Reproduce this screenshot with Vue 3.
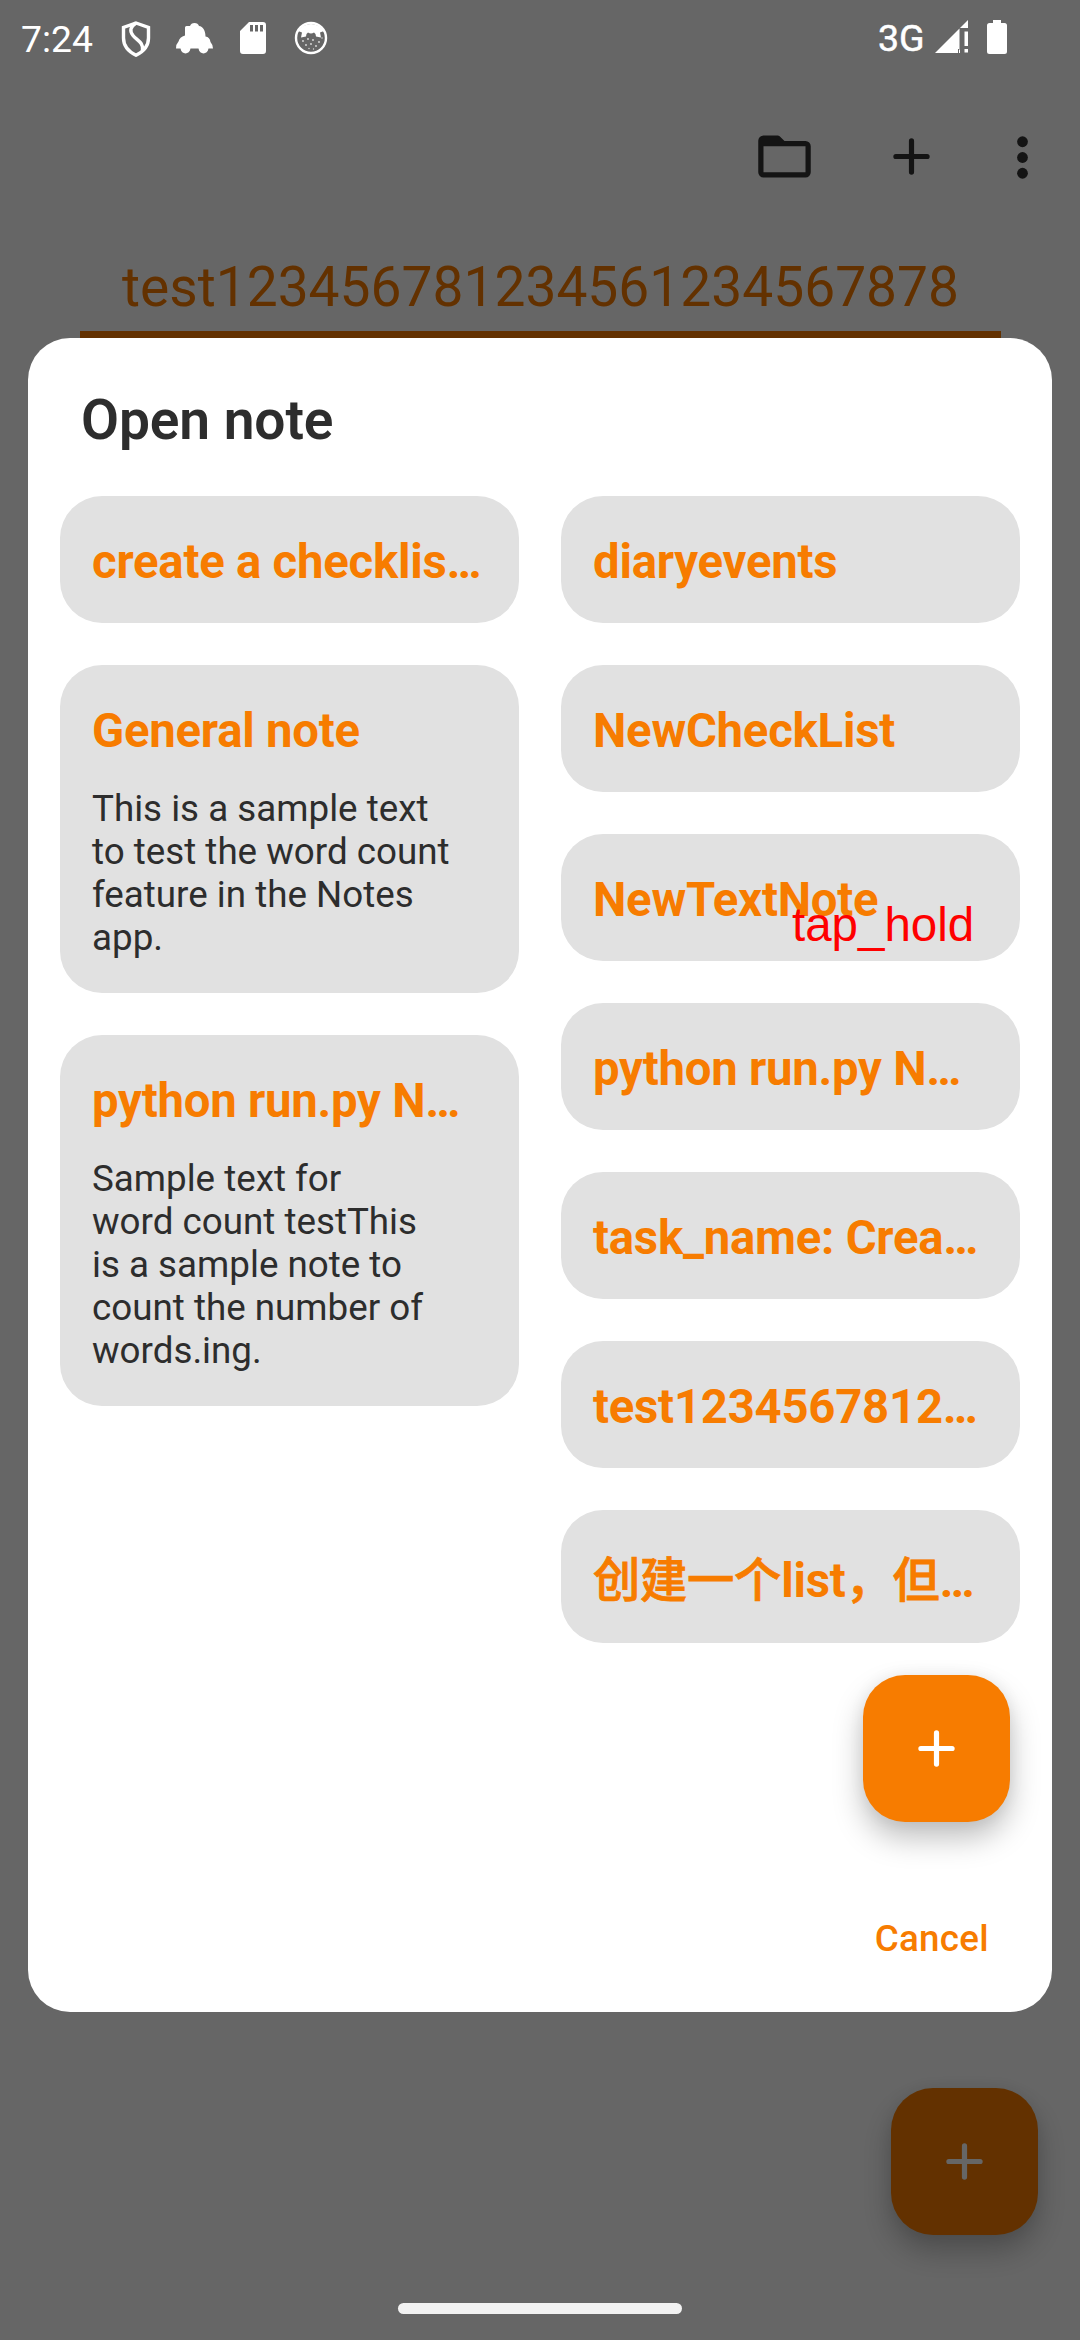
<script setup>
const leftNotes = [
  { title: 'create a checklis…' },
  {
    title: 'General note',
    body: 'This is a sample text\nto test the word count\nfeature in the Notes\napp.',
  },
  {
    title: 'python run.py N…',
    body: 'Sample text for\nword count testThis\nis a sample note to\ncount the number of\nwords.ing.',
  },
]
const rightNotes = [
  { title: 'diaryevents' },
  { title: 'NewCheckList' },
  { title: 'NewTextNote' },
  { title: 'python run.py N…' },
  { title: 'task_name: Crea…' },
  { title: 'test1234567812…' },
  { title: '创建一个list，但…', tall: true },
]
const columns = [leftNotes, rightNotes]

// Split a title into runs so Han text can carry its own weight.
const hanRun = /([\u3000-\u9fff\uff00-\uffef]+)/
const runs = (text) =>
  text
    .split(hanRun)
    .filter(Boolean)
    .map((part) => ({ part, han: hanRun.test(part) }))
</script>

<template>
  <div class="screen">
    <div class="app">
      <header class="toolbar">
        <svg class="icon" viewBox="0 0 24 24">
          <path fill-rule="evenodd" d="M4 4h5.4q.45 0 .75.3L12 6.1h8a2 2 0 0 1 2 2V18a2 2 0 0 1-2 2H4a2 2 0 0 1-2-2V6a2 2 0 0 1 2-2zM4 8.1V18h16V8.1z" />
        </svg>
        <svg class="icon add" viewBox="0 0 24 24">
          <path d="M12 6v12M6 12h12" />
        </svg>
        <svg class="icon more" viewBox="0 0 24 24">
          <circle cx="12" cy="6" r="2.05" />
          <circle cx="12" cy="12" r="2.05" />
          <circle cx="12" cy="18" r="2.05" />
        </svg>
      </header>
      <div class="tab">test123456781234561234567878</div>
      <button class="fab app-fab">
        <svg class="icon add" viewBox="0 0 24 24"><path d="M12 6v12M6 12h12" /></svg>
      </button>
    </div>

    <div class="scrim"></div>

    <div class="overlay">
      <div class="statusbar">
        <span class="clock">7:24</span>
        <svg class="s-shield" viewBox="0 0 30 36" width="30" height="36">
          <path d="M15 2 27.5 6.4V17c0 8-5 13.600-12.500 17.200C7.500 30.600 2.500 25 2.500 17V6.400z" />
          <path d="M15 2C9 6 8.500 10 12 14.500s11 7 9.500 15" />
        </svg>
        <svg class="s-car" viewBox="0 0 37 31" width="37" height="31">
          <path d="M9 4.500q0-1.500 1.500-1.500H14q1-3 4.500-3T23 3c4 .5 6.500 4.500 6.500 10.500 3 .5 4.500 2 5 5.500q2 2 2.500 6.500h-4.500c-1 6.500-9 6.500-10 0h-8c-1 6.500-9 6.500-10 0H0Q0 21 2.500 18.500 3.500 14 9 12.500z" />
        </svg>
        <svg class="s-sd" viewBox="0 0 26 32" width="26" height="32">
          <path fill-rule="evenodd" d="M9 0h14a3 3 0 0 1 3 3v26a3 3 0 0 1-3 3H3a3 3 0 0 1-3-3V9zM10 3v6.500h3V3zM15 3v6.500h3V3zM20 3v6.500h3V3z" />
        </svg>
        <svg class="s-cat" viewBox="0 0 34 34" width="34" height="34">
          <circle class="ring" cx="17" cy="17" r="15" />
          <path d="M4 10Q9 3 17 3t13 7l-4 1.500 1 5-5-1q0-3-2-4-3 2-6 0-2 1-2 4l-5 1 1-5z" />
          <g class="dots">
            <circle cx="9" cy="20" r=".9" /><circle cx="14" cy="18" r=".9" /><circle cx="19" cy="19" r=".9" />
            <circle cx="25" cy="21" r=".9" /><circle cx="12" cy="24" r=".9" /><circle cx="17" cy="23" r=".9" />
            <circle cx="22" cy="25" r=".9" /><circle cx="15" cy="27.500" r=".7" /><circle cx="19.500" cy="28" r=".7" />
            <circle cx="28" cy="17" r=".7" />
          </g>
        </svg>
        <span class="network">3G</span>
        <svg class="s-signal" viewBox="0 0 33 33" width="33" height="33">
          <path d="M33 0v8h-8zM24.500 8.500V29h-1.500v4H0zM29.500 11.500h3.500V26h-3.500zM29.500 29h3.500v3.500h-3.500zM24 29.500h1V33h-1z" />
        </svg>
        <svg class="s-battery" viewBox="0 0 20 34" width="20" height="34">
          <path d="M6 0h8v3h3.500A2.500 2.500 0 0 1 20 5.500v26a2.500 2.500 0 0 1-2.500 2.500h-15A2.500 2.500 0 0 1 0 31.500v-26A2.500 2.500 0 0 1 2.500 3H6z" />
        </svg>
      </div>

      <section class="dialog">
        <h1 class="heading">Open note</h1>
        <div class="notes">
          <div v-for="(col, i) in columns" :key="i" class="column">
            <article v-for="note in col" :key="note.title" class="card" :class="{ tall: note.tall }">
              <h2 class="title"><span v-for="(run, r) in runs(note.title)" :key="r" :class="{ han: run.han }">{{ run.part }}</span></h2>
              <p v-if="note.body" class="body">{{ note.body }}</p>
            </article>
          </div>
        </div>
        <button class="fab">
          <svg class="icon add" viewBox="0 0 24 24"><path d="M12 6v12M6 12h12" /></svg>
        </button>
        <button class="cancel">Cancel</button>
        <span class="gesture">tap_hold</span>
      </section>

      <div class="nav-handle"></div>
    </div>
  </div>
</template>

<style>
body {
  margin: 0;
}
</style>

<style scoped>
.screen {
  display: grid;
  width: 1080px;
  height: 2340px;
  overflow: hidden;
  font-family: Roboto, "Noto Sans CJK SC", sans-serif;
}
.app,
.scrim,
.overlay {
  grid-area: 1 / 1;
  box-sizing: border-box;
  width: 1080px;
  height: 2340px;
  display: flex;
  flex-direction: column;
}
.app {
  background: #fff;
}
.scrim {
  background: rgba(0, 0, 0, 0.6);
  z-index: 1;
}
.overlay {
  z-index: 2;
}
.icon {
  display: block;
  width: 63px;
  height: 63px;
  fill: #333;
}
.add {
  fill: none;
  stroke: #333;
  stroke-width: 2;
  stroke-linecap: round;
}
.add path {
  transform: scale(0.99);
  transform-origin: 12px 12px;
}
.toolbar {
  display: flex;
  justify-content: flex-end;
  align-items: center;
  height: 63px;
  margin-top: 125px;
  padding-right: 26px;
}
.toolbar .add {
  margin-left: 64px;
}
.toolbar .more {
  margin-left: 48px;
  position: relative;
  top: 1px;
}
.tab {
  height: 80px;
  margin: 63px 79px 0 80px;
  border-bottom: 12px solid #f77c00;
  color: #f77c00;
  font-size: 55.125px;
  line-height: 72px;
  text-align: center;
}
.fab {
  display: flex;
  align-items: center;
  justify-content: center;
  align-self: flex-end;
  flex: none;
  width: 147px;
  height: 147px;
  padding: 0;
  border: 0;
  border-radius: 42px;
  background: #f77c00;
  box-shadow: 0 16px 30px rgba(0, 0, 0, 0.25), 0 0 16px rgba(0, 0, 0, 0.06);
}
.fab .add {
  stroke: #fff;
}
.app-fab {
  margin: auto 42px 105px 0;
}
.statusbar {
  display: flex;
  align-items: flex-start;
  height: 76px;
  margin-bottom: 262px;
  flex: none;
  color: #fff;
}
.statusbar svg {
  flex: none;
  fill: #fff;
}
.clock {
  width: 99px;
  padding-left: 21px;
  margin-top: 17px;
  font-size: 37.3px;
  line-height: 44px;
}
.statusbar .s-shield {
  margin: 21px 0 0 1px;
  fill: none;
  stroke: #fff;
  stroke-width: 3.4;
}
.s-car {
  margin: 23px 0 0 25px;
}
.s-sd {
  margin: 22px 0 0 27px;
}
.s-cat {
  margin: 21px 0 0 28px;
}
.statusbar .ring {
  fill: none;
  stroke: #fff;
  stroke-width: 2.4;
}
.dots {
  opacity: 0.8;
}
.network {
  width: 57px;
  margin: 17px 0 0 550px;
  font-size: 37.5px;
  line-height: 42px;
  -webkit-text-stroke: 0.5px #fff;
}
.s-signal {
  margin: 20px 0 0 0;
}
.s-battery {
  margin: 20px 0 0 19px;
}
.dialog {
  position: relative;
  display: flex;
  flex-direction: column;
  flex: none;
  box-sizing: border-box;
  width: 1024px;
  height: 1674px;
  margin: 0 28px;
  padding: 0 32px;
  border-radius: 42px;
  background: #fff;
}
.heading {
  margin: 51px 0 45px 21px;
  color: #2d2d2d;
  font-size: 55.125px;
  line-height: 62px;
  font-weight: 600;
  letter-spacing: -0.1px;
}
.notes {
  display: flex;
  gap: 42px;
}
.column {
  display: flex;
  flex-direction: column;
  gap: 42px;
  width: 459px;
}
.card {
  box-sizing: border-box;
  padding: 38px 32px 33px;
  border-radius: 42px;
  background: #e1e1e1;
}
.card.tall {
  padding: 43px 32px 34px;
}
.title {
  margin: 0;
  color: #f77c00;
  font-size: 47.25px;
  line-height: 56px;
  font-weight: 700;
  letter-spacing: -0.22px;
  white-space: nowrap;
}
.han {
  font-weight: 500;
  -webkit-text-stroke: 0.8px #f77c00;
}
.body {
  margin: 28px 0 1px;
  color: #2d2d2d;
  font-size: 36.75px;
  line-height: 43px;
  white-space: pre;
}
.dialog .fab {
  margin: 32px 10px 0 0;
}
.cancel {
  align-self: flex-end;
  margin: 95px 31px 0 0;
  padding: 0;
  border: 0;
  background: none;
  color: #f77c00;
  font-family: inherit;
  font-size: 36.75px;
  line-height: 44px;
  font-weight: 500;
  letter-spacing: 0.3px;
}
.gesture {
  position: absolute;
  left: 764px;
  top: 559px;
  color: #f00;
  font-family: "Liberation Sans", Arial, sans-serif;
  font-size: 47.5px;
  line-height: 55px;
}
.nav-handle {
  align-self: center;
  width: 284px;
  height: 11px;
  margin-top: 291px;
  border-radius: 6px;
  background: #f2f2f2;
}
</style>
